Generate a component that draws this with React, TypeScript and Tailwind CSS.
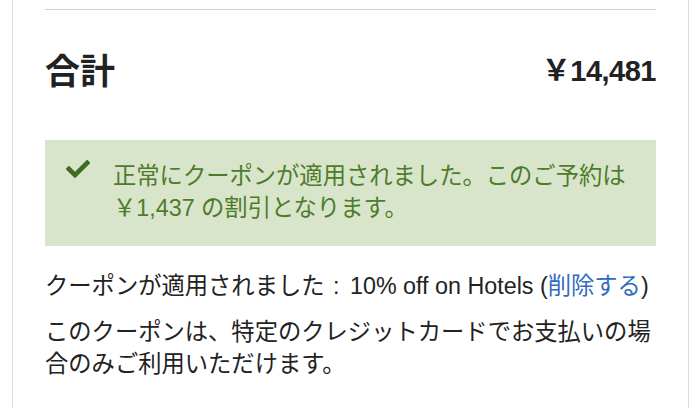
import React from "react";
import { FaCheck } from "react-icons/fa";

export default function App() {
  return (
    <div
      className="w-[696px] h-[408px] bg-white overflow-hidden"
      style={{ fontFamily: '"Liberation Sans", "Noto Sans CJK JP", sans-serif' }}
    >
      <div className="ml-[12px] w-[677px] h-[408px] border-x border-[#dcdcdc] px-[32px] pt-[9px] text-[#222222]">
        <div className="border-t border-[#d2d2d2]" />
        <div className="flex h-[122px] items-center justify-between">
          <div className="text-[35px] font-bold leading-none">合計</div>
          <div className="text-[29px] font-bold leading-none tracking-[-0.5px]">￥14,481</div>
        </div>
        <div className="mt-[8px] flex h-[106px] bg-[#d9e5ca] pl-[21px] pr-[20px] pt-[20px] text-[#4d7c2c]">
          <FaCheck className="mt-[-3px] shrink-0 text-[#3f6c1f]" size={24} />
          <p className="ml-[23px] text-[23.3px] leading-[32px]">
            正常にクーポンが適用されました。このご予約は￥1,437 の割引となります。
          </p>
        </div>
        <p className="mt-[24px] text-[23.3px] leading-[32px]">
          クーポンが適用されました<span className="tracking-[2px]"> : </span>10% off on Hotels (<span className="text-[#2f6cc0]">削除する</span>)
        </p>
        <p className="mt-[14px] text-[23.3px] leading-[32px]">
          このクーポンは、特定のクレジットカードでお支払いの場合のみご利用いただけます。
        </p>
      </div>
    </div>
  );
}
